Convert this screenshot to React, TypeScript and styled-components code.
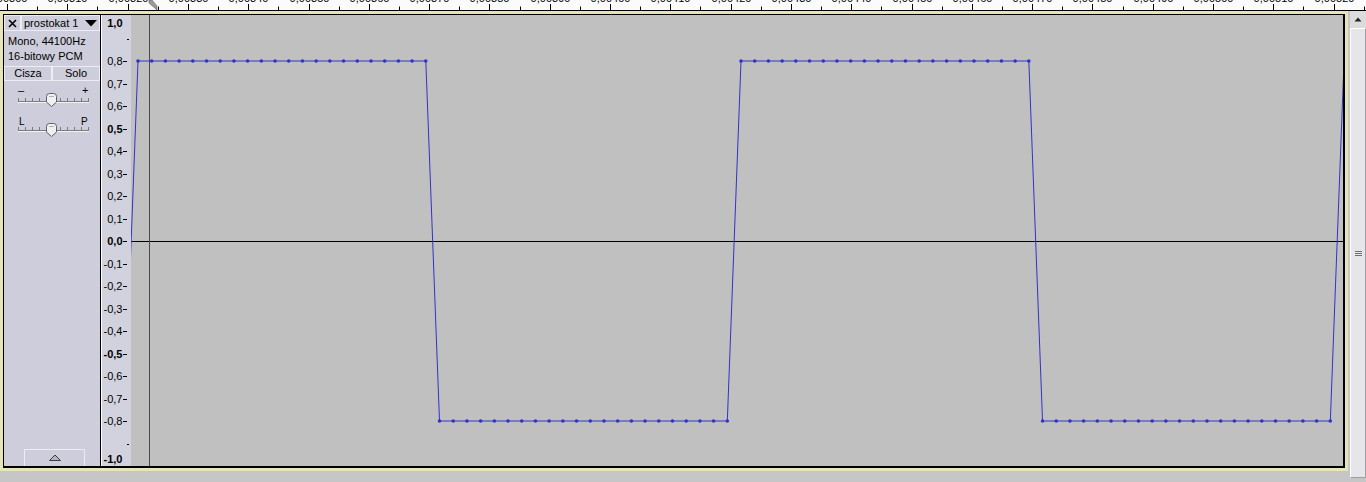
import React from "react";
import styled, { createGlobalStyle } from "styled-components";

const GlobalStyle = createGlobalStyle`
  html, body {
    margin: 0;
    padding: 0;
    width: 1366px;
    height: 482px;
    overflow: hidden;
    background: #c6c6c6;
  }
  body {
    font-family: "Liberation Sans", Arial, sans-serif;
  }
`;

const Window = styled.div`
  width: 1366px;
  height: 482px;
  display: flex;
  flex-direction: column;
  background: #c6c6c6;
`;

const TimeRuler = styled.svg`
  display: block;
  flex: none;
  background: #fbfbfb;
  border-bottom: 1px solid #000;
`;

const Body = styled.div`
  display: flex;
  align-items: flex-start;
`;

const TrackFrame = styled.div`
  width: 1348px;
  box-sizing: border-box;
  border: 3px solid #e6e4b8;
`;

const TrackInner = styled.div`
  display: flex;
  height: 451px;
  border-style: solid;
  border-color: #000;
  border-width: 1px 2px 2px 1px;
`;

const ControlPanel = styled.div`
  width: 96px;
  flex: none;
  background: #cdcddb;
  border-right: 1px solid #000;
  display: flex;
  flex-direction: column;
  font-size: 11px;
  color: #000;
`;

const TitleRow = styled.div`
  display: flex;
  height: 16px;
`;

const LightBox = styled.div`
  box-sizing: border-box;
  border: 1px solid #ececf4;
  display: flex;
  align-items: center;
`;

const CloseBox = styled(LightBox)`
  width: 17px;
  justify-content: center;
`;

const TitleBox = styled(LightBox)`
  flex: 1;
  padding-left: 2px;
  justify-content: space-between;
  line-height: 14px;
`;

const InfoBlock = styled.div`
  padding: 3px 0 0 4px;
  line-height: 15px;
  white-space: nowrap;
`;

const ButtonRow = styled.div`
  display: flex;
  margin-top: 2px;
  height: 15px;
`;

const PanelButton = styled(LightBox)`
  width: 48px;
  justify-content: center;
  line-height: 13px;
`;

const SliderSvg = styled.svg<{ $top: number }>`
  display: block;
  margin-top: ${(p) => p.$top}px;
`;

const Spacer = styled.div`
  flex: 1;
`;

const CollapseButton = styled(LightBox)`
  margin-left: 20px;
  width: 61px;
  height: 17px;
  border-bottom: none;
  justify-content: center;
`;

const VRuler = styled.svg`
  display: block;
  flex: none;
  background: #d2d2de;
  border-left: 1px solid #fff;
`;

const Wave = styled.svg`
  display: block;
  flex: none;
  background: #c0c0c0;
`;

const Scrollbar = styled.div`
  margin-left: 2px;
  width: 16px;
  height: 467px;
  display: flex;
  flex-direction: column;
  background: #dcdcdc;
`;

const ArrowArea = styled.div`
  height: 17px;
  display: flex;
  align-items: center;
  justify-content: center;
`;

const Thumb = styled.div`
  flex: 1;
  box-sizing: border-box;
  background: #e6e6ea;
  border: 1px solid;
  border-color: #fff #a0a0a0 #a0a0a0 #fff;
  display: flex;
  align-items: center;
  justify-content: center;
`;

const RULER_W = 1366;

function TopRuler() {
  const ticks = [];
  const labels = [];
  for (let i = 0; i < 46; i++) {
    const x = Math.round(7 + 30.15 * i) + 0.5;
    const tall = i % 2 === 0;
    ticks.push(
      <line key={"t" + i} x1={x} x2={x} y1={tall ? 4 : 6.5} y2={10} stroke="#000" strokeWidth={1} />
    );
    if (tall) {
      const k = i / 2;
      const v = (0.003 + 0.0001 * k).toFixed(5).replace(".", ",");
      labels.push(
        <text key={"l" + i} x={x} y={2} fontSize={11} textAnchor="middle" fontFamily="Liberation Sans, Arial, sans-serif" fill="#000">
          {v}
        </text>
      );
    }
  }
  return (
    <TimeRuler width={RULER_W} height={10}>
      {labels}
      {ticks}
      <polygon points="149,0 152,0 157,6 157,10 149,3" fill="#9a9a9a" stroke="#606060" strokeWidth={0.6} />
    </TimeRuler>
  );
}

function SliderTrack({ ticksY, thumbY }: { ticksY: number; thumbY: number }) {
  const ticks = [];
  for (let k = 0; k <= 10; k++) {
    const x = 14 + 7 * k + 0.5;
    ticks.push(<line key={k} x1={x} x2={x} y1={ticksY - 3} y2={ticksY} stroke="#7a7a7a" />);
  }
  const t = thumbY;
  return (
    <g>
      <line x1={14} x2={85} y1={ticksY + 0.5} y2={ticksY + 0.5} stroke="#7a7a7a" />
      <line x1={14} x2={85} y1={ticksY + 1.5} y2={ticksY + 1.5} stroke="#f4f4f8" />
      {ticks}
      <path
        d={`M42.5,${t + 3.5} Q42.5,${t + 0.5} 45.5,${t + 0.5} L49.5,${t + 0.5} Q52.5,${t + 0.5} 52.5,${t + 3.5} L52.5,${t + 9} L47.5,${t + 13.5} L42.5,${t + 9} Z`}
        fill="#f0f0f2"
        stroke="#5e5e66"
        strokeWidth={1}
      />
      <line x1={45} x2={50} y1={t + 3.5} y2={t + 3.5} stroke="#b0b0b8" />
    </g>
  );
}

const VY = (v: number) => 226 - 225 * v;

function VerticalScale() {
  const items = [];
  for (let i = 8; i >= -8; i--) {
    const y = VY(i / 10);
    const label = (i < 0 ? "-" : "") + "0," + Math.abs(i);
    const bold = i === 5 || i === 0 || i === -5;
    items.push(
      <g key={i}>
        <text
          x={20.5}
          y={y + 4}
          fontSize={11}
          textAnchor="end"
          fontWeight={bold ? "bold" : "normal"}
          fontFamily="Liberation Sans, Arial, sans-serif"
          fill="#000"
        >
          {label}
        </text>
        <line x1={21} x2={25} y1={Math.round(y) + 0.5} y2={Math.round(y) + 0.5} stroke="#000" />
      </g>
    );
  }
  return (
    <VRuler width={29} height={451}>
      <text x={20.5} y={12} fontSize={11} textAnchor="end" fontWeight="bold" fontFamily="Liberation Sans, Arial, sans-serif">
        1,0
      </text>
      <text x={20.5} y={448} fontSize={11} textAnchor="end" fontWeight="bold" fontFamily="Liberation Sans, Arial, sans-serif">
        -1,0
      </text>
      <line x1={25} x2={27} y1={Math.round(VY(0.9)) + 0.5} y2={Math.round(VY(0.9)) + 0.5} stroke="#000" />
      <line x1={25} x2={27} y1={Math.round(VY(-0.9)) + 0.5} y2={Math.round(VY(-0.9)) + 0.5} stroke="#000" />
      {items}
    </VRuler>
  );
}

function Waveform() {
  const pts: [number, number][] = [];
  for (let n = -1; n <= 88; n++) {
    const x = 7 + 13.705 * n;
    const m = ((n % 44) + 44) % 44;
    const v = m < 22 ? 0.8 : -0.8;
    pts.push([x, VY(v)]);
  }
  const d = pts.map((p, i) => (i === 0 ? "M" : "L") + p[0].toFixed(2) + "," + p[1].toFixed(2)).join(" ");
  return (
    <Wave width={1212} height={451}>
      <line x1={0} x2={1212} y1={226.5} y2={226.5} stroke="#000" />
      <line x1={18.5} x2={18.5} y1={0} y2={451} stroke="#4a4a4a" />
      <path d={d} fill="none" stroke="#3232c8" strokeWidth={1} />
      {pts
        .filter((p) => p[0] >= 0 && p[0] <= 1212)
        .map((p, i) => (
          <circle key={i} cx={p[0]} cy={p[1]} r={1.8} fill="#3232c8" />
        ))}
    </Wave>
  );
}

export default function App() {
  return (
    <>
      <GlobalStyle />
      <Window>
        <TopRuler />
        <Body>
          <TrackFrame>
            <TrackInner>
              <ControlPanel>
                <TitleRow>
                  <CloseBox>
                    <svg width={9} height={9} viewBox="0 0 9 9">
                      <path d="M1,1 L8,8 M8,1 L1,8" stroke="#000" strokeWidth={1.6} />
                    </svg>
                  </CloseBox>
                  <TitleBox>
                    <span>prostokat 1</span>
                    <svg width={14} height={8} viewBox="0 0 14 8" style={{ marginRight: 1 }}>
                      <polygon points="1,1 13,1 7,7.5" fill="#000" />
                    </svg>
                  </TitleBox>
                </TitleRow>
                <InfoBlock>
                  <div>Mono, 44100Hz</div>
                  <div>16-bitowy PCM</div>
                </InfoBlock>
                <ButtonRow>
                  <PanelButton>Cisza</PanelButton>
                  <PanelButton>Solo</PanelButton>
                </ButtonRow>
                <SliderSvg $top={3} width={96} height={24}>
                  <text x={14} y={10} fontSize={11} fontFamily="Liberation Sans, Arial, sans-serif">–</text>
                  <text x={78} y={10} fontSize={11} fontFamily="Liberation Sans, Arial, sans-serif">+</text>
                  <SliderTrack ticksY={17} thumbY={9} />
                </SliderSvg>
                <SliderSvg $top={4} width={96} height={26}>
                  <text x={15} y={13} fontSize={10} fontFamily="Liberation Sans, Arial, sans-serif">L</text>
                  <text x={77} y={13} fontSize={10} fontFamily="Liberation Sans, Arial, sans-serif">P</text>
                  <SliderTrack ticksY={18} thumbY={11} />
                </SliderSvg>
                <Spacer />
                <CollapseButton>
                  <svg width={14} height={8} viewBox="0 0 14 8">
                    <polygon points="1.5,6.5 12.5,6.5 7,1" fill="#b4b4be" stroke="#3c3c44" strokeWidth={1} />
                  </svg>
                </CollapseButton>
              </ControlPanel>
              <VerticalScale />
              <Waveform />
            </TrackInner>
          </TrackFrame>
          <Scrollbar>
            <ArrowArea>
              <svg width={8} height={5} viewBox="0 0 8 5">
                <polygon points="0.5,4.5 7.5,4.5 4,0.5" fill="#222" />
              </svg>
            </ArrowArea>
            <Thumb>
              <svg width={7} height={7} viewBox="0 0 7 7">
                <path d="M0,1.5 H7 M0,3.5 H7 M0,5.5 H7" stroke="#707070" strokeWidth={1} />
              </svg>
            </Thumb>
          </Scrollbar>
        </Body>
      </Window>
    </>
  );
}
